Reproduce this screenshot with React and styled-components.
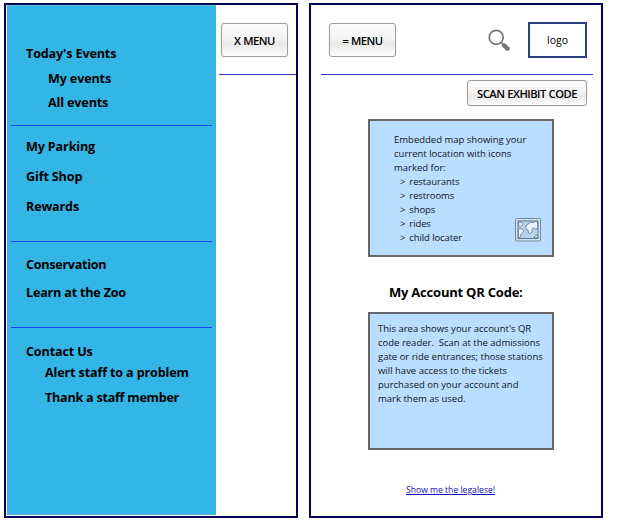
import React from 'react';
import styled, { createGlobalStyle } from 'styled-components';

const GlobalStyle = createGlobalStyle`
  * { box-sizing: border-box; }
  body {
    margin: 0;
    background: #fff;
    color: #000;
    font-family: "Open Sans", "Noto Sans", sans-serif;
  }
`;

const Page = styled.main`
  display: flex;
  gap: 11px;
  padding: 3px 0 0 4px;
  height: 529px;
`;

const Screen = styled.section`
  display: flex;
  flex-direction: ${(p) => (p.$column ? 'column' : 'row')};
  width: 294px;
  height: 515px;
  border: 2px solid #000055;
`;

const Sidebar = styled.nav`
  width: 209px;
  height: 510px;
  margin-left: 1px;
  padding: 0 4px 0 4px;
  background: #33b5e5;
  border-top: 1px solid #62bfe5;
  border-bottom: 1px solid #58a9c8;
`;

const MenuGroup = styled.ul`
  list-style: none;
  margin: 0;
  height: ${(p) => p.$height}px;
  padding: ${(p) => p.$top}px 0 0 15px;
  border-bottom: ${(p) => (p.$last ? '0' : '1px solid #1144ee')};
`;

const MenuItem = styled.li`
  height: 20px;
  margin-bottom: ${(p) => p.$gap || 0}px;
  padding-left: ${(p) => p.$indent || 0}px;
  font-size: 12.6px;
  font-weight: 700;
  line-height: 20px;
  letter-spacing: ${(p) => p.$tracking ?? -0.15}px;
  white-space: nowrap;
`;

const Peek = styled.div`
  flex: 1;
  padding-left: 3px;
`;

const PeekHeader = styled.header`
  height: 70px;
  padding: 18px 0 0 2px;
  border-bottom: 1px solid #3333bb;
`;

const Button = styled.button`
  display: flex;
  align-items: center;
  justify-content: center;
  width: ${(p) => p.$width}px;
  height: ${(p) => p.$height}px;
  padding: 0;
  border: 1px solid #a09c94;
  border-radius: 3px;
  background: linear-gradient(#fafafa, #f4f4f4 45%, #e9e9e9 60%, #fbfbfb);
  box-shadow: 0 0 1px #c8c4bc;
  color: #000;
  font-family: inherit;
  font-size: 11.2px;
  font-weight: 600;
  letter-spacing: -0.5px;
  word-spacing: 0.3px;
  white-space: nowrap;
`;

const AppHeader = styled.header`
  display: flex;
  align-items: flex-start;
  height: 70px;
  margin: 0 8px 0 10px;
  padding: 18px 6px 0 8px;
  border-bottom: 1px solid #3333bb;
`;

const SearchIcon = styled.svg`
  margin: 6px 17px 0 auto;
`;

const Logo = styled.div`
  display: flex;
  align-items: center;
  justify-content: center;
  width: 59px;
  height: 36px;
  border: 2px solid #2b3f80;
  margin-top: -1px;
  font-size: 10.5px;
`;

const Actions = styled.div`
  display: flex;
  justify-content: flex-end;
  padding: 5px 14px 0 0;
`;

const Box = styled.div`
  display: flex;
  justify-content: space-between;
  width: 186px;
  height: 138px;
  margin: ${(p) => p.$top}px 0 0 57px;
  padding: ${(p) => p.$padding};
  border: 2px solid #666;
  background: #bbddff;
  color: #10151c;
  font-size: 9.5px;
  line-height: 14px;
  white-space: pre;
`;

const Copy = styled.p`
  margin: 0;
`;

const Places = styled.ul`
  list-style: none;
  margin: 0;
  padding: 0 0 0 6px;
`;

const Place = styled.li`
  display: flex;
  gap: 4px;
  letter-spacing: -0.1px;
`;

const MapIcon = styled.svg`
  align-self: flex-end;
  margin: 0 0 13px -20px;
`;

const Heading = styled.h2`
  margin: 25px 0 0 78px;
  height: 20px;
  font-size: 13px;
  font-weight: 700;
  line-height: 20px;
  letter-spacing: -0.22px;
`;

const LegalLink = styled.a`
  align-self: flex-start;
  margin: 33px 0 0 95px;
  color: #1010b8;
  font-size: 8.6px;
  line-height: 14px;
  text-decoration: underline;
`;

const places = ['restaurants', 'restrooms', 'shops', 'rides', 'child locater'];

export default function App() {
  return (
    <>
      <GlobalStyle />
      <Page>
        <Screen>
          <Sidebar>
            <MenuGroup $height={120} $top={38}>
              <MenuItem $gap={5}>Today's Events</MenuItem>
              <MenuItem $indent={22} $gap={4}>My events</MenuItem>
              <MenuItem $indent={22}>All events</MenuItem>
            </MenuGroup>
            <MenuGroup $height={116} $top={11}>
              <MenuItem $gap={10}>My Parking</MenuItem>
              <MenuItem $gap={10}>Gift Shop</MenuItem>
              <MenuItem>Rewards</MenuItem>
            </MenuGroup>
            <MenuGroup $height={86} $top={13}>
              <MenuItem $gap={8} $tracking={-0.28}>Conservation</MenuItem>
              <MenuItem $tracking={-0.2}>Learn at the Zoo</MenuItem>
            </MenuGroup>
            <MenuGroup $height={180} $top={14} $last>
              <MenuItem $gap={1}>Contact Us</MenuItem>
              <MenuItem $indent={19} $gap={5}>Alert staff to a problem</MenuItem>
              <MenuItem $indent={19} $tracking={-0.25}>Thank a staff member</MenuItem>
            </MenuGroup>
          </Sidebar>
          <Peek>
            <PeekHeader>
              <Button $width={67} $height={34}>X MENU</Button>
            </PeekHeader>
          </Peek>
        </Screen>

        <Screen $column>
          <AppHeader>
            <Button $width={67} $height={34}>= MENU</Button>
            <SearchIcon width="24" height="24" viewBox="0 0 24 24" fill="none" stroke="#757575">
              <circle cx="9.2" cy="8.3" r="7" strokeWidth="1.7" />
              <path d="M14 13.2l2.2 2.2" strokeWidth="1.7" />
              <path d="M17.2 16.5l3.300 3.200" strokeWidth="4.400" strokeLinecap="round" />
            </SearchIcon>
            <Logo>logo</Logo>
          </AppHeader>
          <Actions>
            <Button $width={120} $height={26}>SCAN EXHIBIT CODE</Button>
          </Actions>
          <Box $top={13} $padding="12px 11px 0 24px">
            <div>
              <Copy>{'Embedded map showing your\ncurrent location with icons\nmarked for:'}</Copy>
              <Places>
                {places.map((name) => (
                  <Place key={name}><span>&gt;</span><span>{name}</span></Place>
                ))}
              </Places>
            </div>
            <MapIcon width="26" height="24" viewBox="0 0 26 24">
              <rect x="0.5" y="0.5" width="25" height="22.5" rx="1" fill="#cfe3f4" stroke="#73899c" />
              <rect x="3" y="3" width="20" height="17.5" fill="#b5d3ed" stroke="#60778a" />
              <g fill="#e4f0fb" stroke="#6c8499" strokeWidth="0.9">
                <path d="M3.500 4l3 .5 1.500 2-1.500 1-1 1.500-2-1.500z" />
                <path d="M3.500 10.500l3 .3 2.500 2-1.500 2.500-2 1.500-.5 3H3.500z" />
                <path d="M10.500 9.500l1-2.500 2-1 1.500-2 3 .5 2-1h2.500v6l-2 2-1.500-2-1.500 1-.5 3-2 2.500-1.500-1-.5-3-2-.5z" />
                <path d="M19 19.500l1.500-2 2-.5v3z" />
              </g>
            </MapIcon>
          </Box>
          <Heading>My Account QR Code:</Heading>
          <Box $top={10} $padding="8px 0 0 8px">
            <Copy>{"This area shows your account's QR\ncode reader.  Scan at the admissions\ngate or ride entrances; those stations\nwill have access to the tickets\npurchased on your account and\nmark them as used."}</Copy>
          </Box>
          <LegalLink href="#legal">Show me the legalese!</LegalLink>
        </Screen>
      </Page>
    </>
  );
}
